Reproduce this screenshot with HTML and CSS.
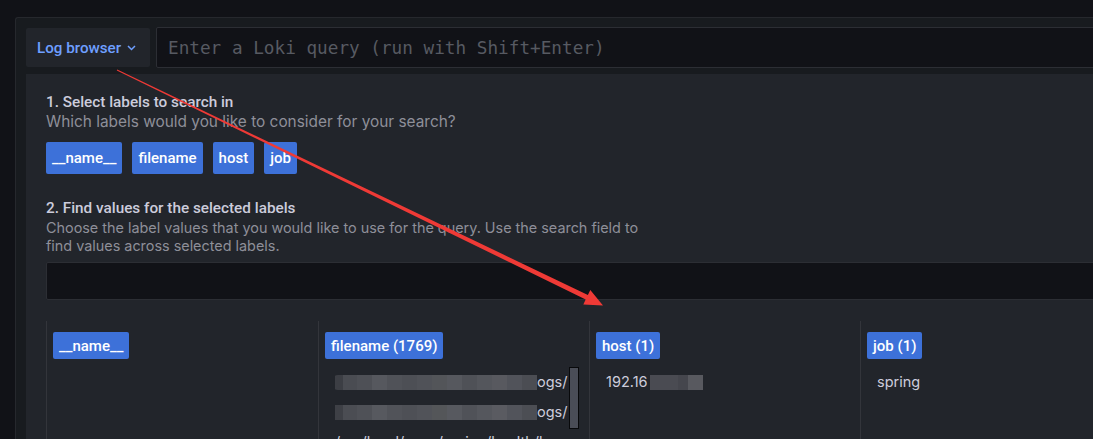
FILE: index.html
```html
<!DOCTYPE html>
<html>
<head>
<meta charset="utf-8">
<link rel="stylesheet" href="styles.css">
</head>
<body>
<div class="panel">
  <div class="query-row">
    <div class="log-btn">Log browser
      <svg class="chev" width="9" height="6" viewBox="0 0 9 6"><path d="M1 1 L4.5 4.5 L8 1" fill="none" stroke="#6e9fff" stroke-width="1.5"/></svg>
    </div>
    <div class="query-input">Enter a Loki query (run with Shift+Enter)</div>
  </div>
  <div class="browser">
    <div class="heading">1. Select labels to search in</div>
    <div class="desc">Which labels would you like to consider for your search?</div>
    <div class="chips">
      <span class="chip">__name__</span>
      <span class="chip">filename</span>
      <span class="chip">host</span>
      <span class="chip">job</span>
    </div>
    <div class="heading h2">2. Find values for the selected labels</div>
    <div class="desc narrow">Choose the label values that you would like to use for the query. Use the search field to find values across selected labels.</div>
    <div class="search"></div>
    <div class="columns">
      <div class="col">
        <span class="chip small">__name__</span>
      </div>
      <div class="col">
        <span class="chip small">filename (1769)</span>
        <div class="values">
          <div class="val"><span class="blur b1"></span>ogs/</div>
          <div class="val"><span class="blur b2"></span>ogs/</div>
          <div class="val">/usr/local/apps/spring/health/logs/test</div>
          <div class="thumb"></div>
        </div>
      </div>
      <div class="col">
        <span class="chip small">host (1)</span>
        <div class="values">
          <div class="val">192.16<span class="blur b3"></span></div>
        </div>
      </div>
      <div class="col">
        <span class="chip small">job (1)</span>
        <div class="values">
          <div class="val">spring</div>
        </div>
      </div>
    </div>
  </div>
</div>
<svg class="arrow" width="1093" height="439" viewBox="0 0 1093 439">
  <polygon points="117.2,69.55 587.9,294.95 590.3,290.0 603,305.5 583.3,304.4 585.7,299.45 116.8,70.45" fill="#ef3a36"/>
</svg>
</body>
</html>
```
FILE: styles.css
```css
html, body {
  margin: 0;
  padding: 0;
}
body {
  background: #111217;
  width: 1093px;
  height: 439px;
  overflow: hidden;
  font-family: Roboto, "Noto Sans", sans-serif;
  font-size: 14px;
  color: #ccccdc;
}
.panel {
  margin: 17px 0 0 15px;
  width: 1300px;
  height: 600px;
  background: #181b1f;
  border-top: 1px solid #26282d;
  border-left: 1px solid #26282d;
  border-top-left-radius: 3px;
  padding: 10px 0 0 10px;
  box-sizing: border-box;
}
.query-row {
  display: flex;
  gap: 6px;
  height: 40px;
}
.log-btn {
  width: 124px;
  box-sizing: border-box;
  background: #22252b;
  border-radius: 2px;
  color: #6e9fff;
  font-weight: 500;
  font-size: 15.2px;
  display: flex;
  align-items: center;
  padding-left: 11px;
  height: 39px;
}
.chev {
  margin-left: 6px;
  margin-top: 1px;
}
.query-input {
  flex: 1;
  background: #111217;
  border: 1px solid #2c2e34;
  border-radius: 2px;
  font-family: "DejaVu Sans Mono", "Liberation Mono", monospace;
  font-size: 17.7px;
  color: #575a62;
  display: flex;
  align-items: center;
  padding-left: 11px;
  box-sizing: border-box;
  height: 41px;
  margin-top: -1px;
}
.browser {
  margin-top: 6px;
  background: #22252b;
  padding: 18px 20px 0 20px;
  height: 600px;
}
.heading {
  font-weight: 500;
  font-size: 15.3px;
  line-height: 20px;
  color: #ccccdc;
}
.h2 {
  margin-top: 24px;
}
.desc {
  margin-top: 1px;
  font-family: Inter, Roboto, sans-serif;
  font-size: 15.4px;
  line-height: 18px;
  color: #8e8f99;
}
.narrow {
  width: 600px;
  font-size: 14.4px;
}
.chips {
  display: flex;
  gap: 10px;
  margin-top: 11px;
}
.chip {
  display: inline-flex;
  align-items: center;
  height: 32px;
  padding: 0 6px;
  background: #3d71d9;
  color: #ffffff;
  font-weight: 500;
  font-size: 15px;
  border-radius: 2px;
  box-sizing: border-box;
}
.chip.small {
  height: 27px;
}
.search {
  margin-top: 7px;
  height: 38px;
  background: #111217;
  border: 1px solid #2c2e34;
  border-radius: 2px;
  box-sizing: border-box;
}
.columns {
  display: grid;
  grid-template-columns: 272px 271px 271px 271px;
  margin-top: 21px;
}
.col {
  border-left: 1px solid #33353b;
  padding: 11px 10px 0 6px;
  height: 200px;
  position: relative;
  min-width: 0;
}
.values {
  margin-top: 8px;
  position: relative;
  padding-left: 10px;
  padding-right: 11px;
}
.val {
  height: 30px;
  line-height: 30px;
  white-space: nowrap;
  overflow: hidden;
  font-family: Inter, Roboto, sans-serif;
  font-size: 14.5px;
  color: #ccccdc;
  display: flex;
  align-items: center;
}
.blur {
  display: inline-block;
  flex: none;
  height: 15px;
}
.b1 {
  width: 206px;
  margin-left: -4px;
  border-radius: 7px 0 0 7px;
  background: linear-gradient(90deg,
    #3c3e44 0 12px, #4a4c52 12px 26px, #4e5056 26px 41px, #56585e 41px 56px,
    #505258 56px 71px, #4d4f55 71px 86px, #505258 86px 101px, #535559 101px 116px,
    #56585e 116px 131px, #4f5157 131px 146px, #54565c 146px 161px, #58595f 161px 176px,
    #51535a 176px 191px, #4b4d53 191px 206px);
}
.b2 {
  width: 208px;
  margin-left: -6px;
  border-radius: 4px 0 0 4px;
  background: linear-gradient(90deg,
    #3e4046 0 14px, #4b4d53 14px 28px, #4f5157 28px 43px, #57595f 43px 58px,
    #515359 58px 73px, #4e5056 73px 88px, #515359 88px 103px, #545659 103px 118px,
    #57595f 118px 133px, #505258 133px 148px, #55575d 148px 163px, #5a5b61 163px 178px,
    #52545b 178px 193px, #4c4e54 193px 208px);
}
.b3 {
  width: 53px;
  margin-left: 2px;
  background: linear-gradient(90deg, #4a4b52 0 28px, #45464d 28px 38px, #58595f 38px 53px);
}
.thumb {
  position: absolute;
  left: 244px;
  top: 0;
  width: 8px;
  height: 60px;
  background: #4a4d57;
  border: 1px solid #08090b;
}
.arrow {
  position: absolute;
  left: 0;
  top: 0;
  pointer-events: none;
}
```
